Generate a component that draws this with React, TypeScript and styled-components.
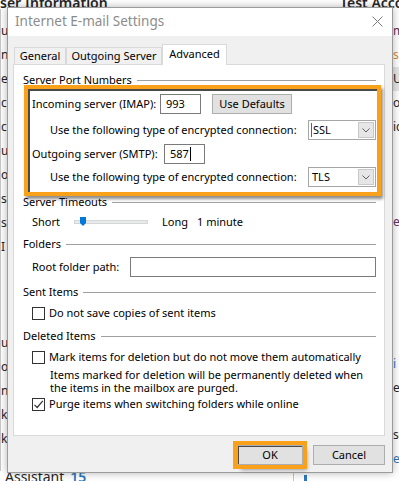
import React from "react";
import styled, { createGlobalStyle } from "styled-components";

const GlobalStyle = createGlobalStyle`
  html, body { margin: 0; padding: 0; background: #ffffff; }
  body { overflow: hidden; }
`;

const UI_FONT = `"Noto Sans", "Open Sans", sans-serif`;

/* ---------- Outlook window behind the dialog ---------- */

const Backdrop = styled.div`
  position: relative;
  width: 399px;
  height: 481px;
  overflow: hidden;
  background: #ffffff;
  font-family: ${UI_FONT};
  color: #262626;
  display: grid;
  grid-template-columns: 8px 1fr 7px;
  grid-template-rows: 9px 1fr 10px;
`;

const TopStrip = styled.div`
  grid-column: 1 / 4;
  display: flex;
  height: 9px;
  overflow: hidden;
  font-size: 14px;
  font-weight: 600;
  line-height: 12px;
  white-space: nowrap;
`;

const TopTitle = styled.span<{ $width: number }>`
  flex: 0 0 ${(p) => p.$width}px;
  margin-top: -3px;
`;

const EdgeColumn = styled.div<{ $divider?: boolean }>`
  display: flex;
  flex-direction: column;
  overflow: hidden;
  font-size: 12px;
  line-height: 24px;
  white-space: nowrap;
  padding-top: 10px;
  border-left: ${(p) => (p.$divider ? "1px solid #c8c8c8" : "none")};
`;

const Fragment = styled.span<{ $color?: string; $shade?: boolean }>`
  height: 24px;
  color: ${(p) => p.$color || "#262626"};
  background: ${(p) => (p.$shade ? "#e6e6e6" : "transparent")};
`;

const BottomStrip = styled.div`
  grid-column: 1 / 4;
  display: flex;
  align-items: flex-start;
  font-size: 14px;
  line-height: 12px;
  overflow: hidden;
  white-space: nowrap;
  padding-left: 5px;
`;

const BlueCount = styled.span`
  color: #2b79c2;
  font-weight: 600;
  margin-left: 6px;
`;

const BottomDivider = styled.span`
  margin-left: 207px;
  width: 1px;
  height: 10px;
  background: #c8c8c8;
`;

const BlueMark = styled.span`
  margin-left: 10px;
  margin-top: 4px;
  width: 3px;
  height: 6px;
  background: #2b79c2;
`;

/* ---------- dialog ---------- */

const Dialog = styled.div`
  position: absolute;
  left: 7px;
  top: 7px;
  width: 386px;
  height: 466px;
  box-sizing: border-box;
  border: 1px solid #9b9b9b;
  background: #f0f0f0;
  box-shadow: 0 0 8px rgba(0, 0, 0, 0.3);
  display: flex;
  flex-direction: column;
  font-family: ${UI_FONT};
  font-size: 11px;
  color: #000000;
`;

const TitleBar = styled.div`
  height: 28px;
  flex: 0 0 28px;
  background: #ffffff;
  display: flex;
  align-items: center;
  padding: 0 8px 0 7px;
`;

const Title = styled.span`
  flex: 1;
  font-size: 13.5px;
  color: #8c8c8c;
  padding-bottom: 2px;
`;

const CloseGlyph = styled.svg`
  width: 11px;
  height: 11px;
  margin-right: 1px;
  margin-bottom: 1px;
`;

const TabStrip = styled.div`
  display: flex;
  align-items: flex-end;
  height: 21px;
  margin: 8px 0 -1px 6px;
  position: relative;
  z-index: 1;
`;

const Tab = styled.div<{ $active?: boolean; $width: number }>`
  box-sizing: border-box;
  width: ${(p) => p.$width}px;
  height: ${(p) => (p.$active ? 21 : 18)}px;
  border: 1px solid #d9d9d9;
  border-bottom: ${(p) => (p.$active ? "none" : "1px solid #d9d9d9")};
  background: ${(p) => (p.$active ? "#ffffff" : "#f0f0f0")};
  display: flex;
  justify-content: center;
  align-items: ${(p) => (p.$active ? "flex-start" : "center")};
  padding-top: ${(p) => (p.$active ? 2 : 0)}px;
  line-height: 14px;
  white-space: nowrap;
`;

const Panel = styled.div`
  box-sizing: border-box;
  height: 372px;
  margin: 0 7px 0 5px;
  background: #ffffff;
  border: 1px solid #d9d9d9;
  padding: 8px 8px 0 9px;
  display: flex;
  flex-direction: column;
`;

const GroupHeader = styled.div<{ $top: number }>`
  display: flex;
  align-items: center;
  height: 14px;
  line-height: 14px;
  margin-top: ${(p) => p.$top}px;
  white-space: nowrap;

  &::after {
    content: "";
    flex: 1;
    height: 1px;
    margin-left: 5px;
    margin-top: 1px;
    background: #a0a0a0;
  }
`;

const Highlight = styled.div`
  box-sizing: border-box;
  height: 111px;
  margin: -2px -5px 0 1px;
  border: 4px solid #f9a11b;
  box-shadow: inset 2px 2px 0 #4a4a4a, 2px 3px 3px rgba(0, 0, 0, 0.45);
  padding: 5px 1px 0 4px;
  display: flex;
  flex-direction: column;
`;

const Row = styled.div<{ $top: number; $indent?: number; $height?: number }>`
  display: flex;
  align-items: center;
  height: ${(p) => p.$height || 20}px;
  margin-top: ${(p) => p.$top}px;
  padding-left: ${(p) => p.$indent || 0}px;
  white-space: nowrap;
`;

const Label = styled.span<{ $width?: number }>`
  flex: ${(p) => (p.$width ? `0 0 ${p.$width}px` : "1")};
  line-height: 14px;
`;

const TextBox = styled.div<{ $width: number }>`
  box-sizing: border-box;
  width: ${(p) => p.$width}px;
  height: 20px;
  border: 1px solid #7a7a7a;
  background: #ffffff;
  padding-left: 5px;
  display: flex;
  align-items: center;
  line-height: 14px;
`;

const Caret = styled.span`
  width: 1px;
  height: 14px;
  margin-left: 1px;
  background: #000000;
`;

const PushButton = styled.div<{ $width: number; $left?: number }>`
  box-sizing: border-box;
  width: ${(p) => p.$width}px;
  height: 20px;
  margin-left: ${(p) => p.$left || 0}px;
  background: #e1e1e1;
  border: 1px solid #adadad;
  display: flex;
  align-items: center;
  justify-content: center;
  line-height: 14px;
`;

const Combo = styled.div<{ $focused?: boolean }>`
  box-sizing: border-box;
  width: 68px;
  height: 20px;
  border: 1px solid #a6a6a6;
  background: #ffffff;
  display: flex;
  align-items: center;
  padding: 0 1px 0 ${(p) => (p.$focused ? 2 : 3)}px;
`;

const ComboText = styled.span<{ $focused?: boolean }>`
  flex: 1;
  line-height: 14px;
  padding-left: ${(p) => (p.$focused ? 1 : 0)}px;
  border-left: ${(p) => (p.$focused ? "1px solid #0078d7" : "none")};
`;

const ComboArrow = styled.div`
  box-sizing: border-box;
  width: 16px;
  height: 16px;
  background: #e6e6e6;
  border: 1px solid #c9c9c9;
  display: flex;
  align-items: center;
  justify-content: center;
`;

const SliderTrack = styled.div`
  position: relative;
  box-sizing: border-box;
  width: 74px;
  height: 4px;
  margin: 0 14px 0 0;
  background: #e7eaea;
  border: 1px solid #d6d6d6;
`;

const SliderThumb = styled.svg`
  position: absolute;
  left: 5px;
  top: -4px;
  width: 6px;
  height: 9px;
`;

const CheckBox = styled.span`
  box-sizing: border-box;
  flex: 0 0 13px;
  height: 13px;
  border: 1px solid #333333;
  background: #ffffff;
  margin-right: 4px;
  display: flex;
  align-items: center;
  justify-content: center;
`;

const Note = styled.div`
  margin-top: 3px;
  padding-left: 27px;
  display: flex;
  flex-direction: column;
  white-space: nowrap;
`;

const NoteLine = styled.span`
  height: 13px;
  line-height: 13px;
  overflow: visible;
`;

const Footer = styled.div`
  display: flex;
  justify-content: flex-end;
  gap: 10px;
  margin-top: 9px;
  padding-right: 7px;
`;

const DefaultButton = styled(PushButton)`
  outline: 4px solid #f9a11b;
  outline-offset: 0;
  box-shadow: inset 1px 1px 0 #4a4a4a, 4px 5px 4px rgba(0, 0, 0, 0.35);
`;

const Chevron: React.FC = () => (
  <svg width="8" height="5" viewBox="0 0 8 5">
    <path d="M0.5 0.5 L4 4 L7.5 0.5" fill="none" stroke="#606060" strokeWidth="1" />
  </svg>
);

const Check: React.FC = () => (
  <svg width="11" height="11" viewBox="0 0 11 11">
    <path d="M1.5 5.8 L4.2 8.5 L9.8 1.8" fill="none" stroke="#333333" strokeWidth="1.2" />
  </svg>
);

const leftFragments = ["u", "na", "en", "cc", "cc", "ut", "og", "se", "s", "I", "", "", "", "u", "ox", "na", "k", "k I"];
const rightFragments: { t: string; c?: string; shade?: boolean }[] = [
  { t: "m", c: "#6b2a5b" },
  { t: "s -", c: "#e08a2a" },
  { t: "U", shade: true },
  { t: "o" },
  { t: "ic" },
  { t: "" },
  { t: "" },
  { t: "" },
  { t: "ep", c: "#6b2a5b" },
  { t: "" },
  { t: "" },
  { t: "" },
  { t: "" },
  { t: "" },
  { t: "i", c: "#2b79c2" },
  { t: "e-" },
  { t: "" },
  { t: "se" },
  { t: "ec", c: "#2b79c2" },
];

const App: React.FC = () => {
  return (
    <>
      <GlobalStyle />
      <Backdrop>
        <TopStrip>
          <TopTitle $width={340}>ser Information</TopTitle>
          <TopTitle $width={80}>Test Account</TopTitle>
        </TopStrip>

        <EdgeColumn $divider>
          {leftFragments.map((f, i) => (
            <Fragment key={i}>{f}</Fragment>
          ))}
        </EdgeColumn>
        <div />
        <EdgeColumn $divider>
          {rightFragments.map((f, i) => (
            <Fragment key={i} $color={f.c} $shade={f.shade}>
              {f.t}
            </Fragment>
          ))}
        </EdgeColumn>

        <BottomStrip>
          Assistant<BlueCount>15</BlueCount>
          <BottomDivider />
          <BlueMark />
        </BottomStrip>

        <Dialog>
          <TitleBar>
            <Title>Internet E-mail Settings</Title>
            <CloseGlyph viewBox="0 0 11 11">
              <path d="M0.5 0.5 L10.5 10.5 M10.5 0.5 L0.5 10.5" stroke="#7a7a7a" strokeWidth="1" />
            </CloseGlyph>
          </TitleBar>

          <TabStrip>
            <Tab $width={52}>General</Tab>
            <Tab $width={96}>Outgoing Server</Tab>
            <Tab $width={65} $active>
              Advanced
            </Tab>
          </TabStrip>

          <Panel>
            <GroupHeader $top={0}>Server Port Numbers</GroupHeader>
            <Highlight>
              <Row $top={0}>
                <Label $width={128}>Incoming server (IMAP):</Label>
                <TextBox $width={41}>993</TextBox>
                <PushButton $width={80} $left={11}>
                  Use Defaults
                </PushButton>
              </Row>
              <Row $top={6} $indent={18}>
                <Label>Use the following type of encrypted connection:</Label>
                <Combo $focused>
                  <ComboText $focused>SSL</ComboText>
                  <ComboArrow>
                    <Chevron />
                  </ComboArrow>
                </Combo>
              </Row>
              <Row $top={4}>
                <Label $width={132}>Outgoing server (SMTP):</Label>
                <TextBox $width={41}>
                  587
                  <Caret />
                </TextBox>
              </Row>
              <Row $top={3} $indent={18}>
                <Label>Use the following type of encrypted connection:</Label>
                <Combo>
                  <ComboText>TLS</ComboText>
                  <ComboArrow>
                    <Chevron />
                  </ComboArrow>
                </Combo>
              </Row>
            </Highlight>

            <GroupHeader $top={-1}>Server Timeouts</GroupHeader>
            <Row $top={5} $indent={9} $height={16}>
              <Label $width={42}>Short</Label>
              <SliderTrack>
                <SliderThumb viewBox="0 0 6 9">
                  <path d="M0 0 H6 V6 L3 9 L0 6 Z" fill="#0078d7" />
                </SliderThumb>
              </SliderTrack>
              <Label $width={35}>Long</Label>
              <Label>1 minute</Label>
            </Row>

            <GroupHeader $top={7}>Folders</GroupHeader>
            <Row $top={6} $indent={9}>
              <Label $width={98}>Root folder path:</Label>
              <TextBox $width={247} />
            </Row>

            <GroupHeader $top={8}>Sent Items</GroupHeader>
            <Row $top={6} $indent={9} $height={16}>
              <CheckBox />
              <Label>Do not save copies of sent items</Label>
            </Row>

            <GroupHeader $top={8}>Deleted Items</GroupHeader>
            <Row $top={6} $indent={9} $height={16}>
              <CheckBox />
              <Label>Mark items for deletion but do not move them automatically</Label>
            </Row>
            <Note>
              <NoteLine>Items marked for deletion will be permanently deleted when</NoteLine>
              <NoteLine>the items in the mailbox are purged.</NoteLine>
            </Note>
            <Row $top={2} $indent={9} $height={16}>
              <CheckBox>
                <Check />
              </CheckBox>
              <Label>Purge items when switching folders while online</Label>
            </Row>
          </Panel>

          <Footer>
            <DefaultButton $width={66}>OK</DefaultButton>
            <PushButton $width={72}>Cancel</PushButton>
          </Footer>
        </Dialog>
      </Backdrop>
    </>
  );
};

export default App;
